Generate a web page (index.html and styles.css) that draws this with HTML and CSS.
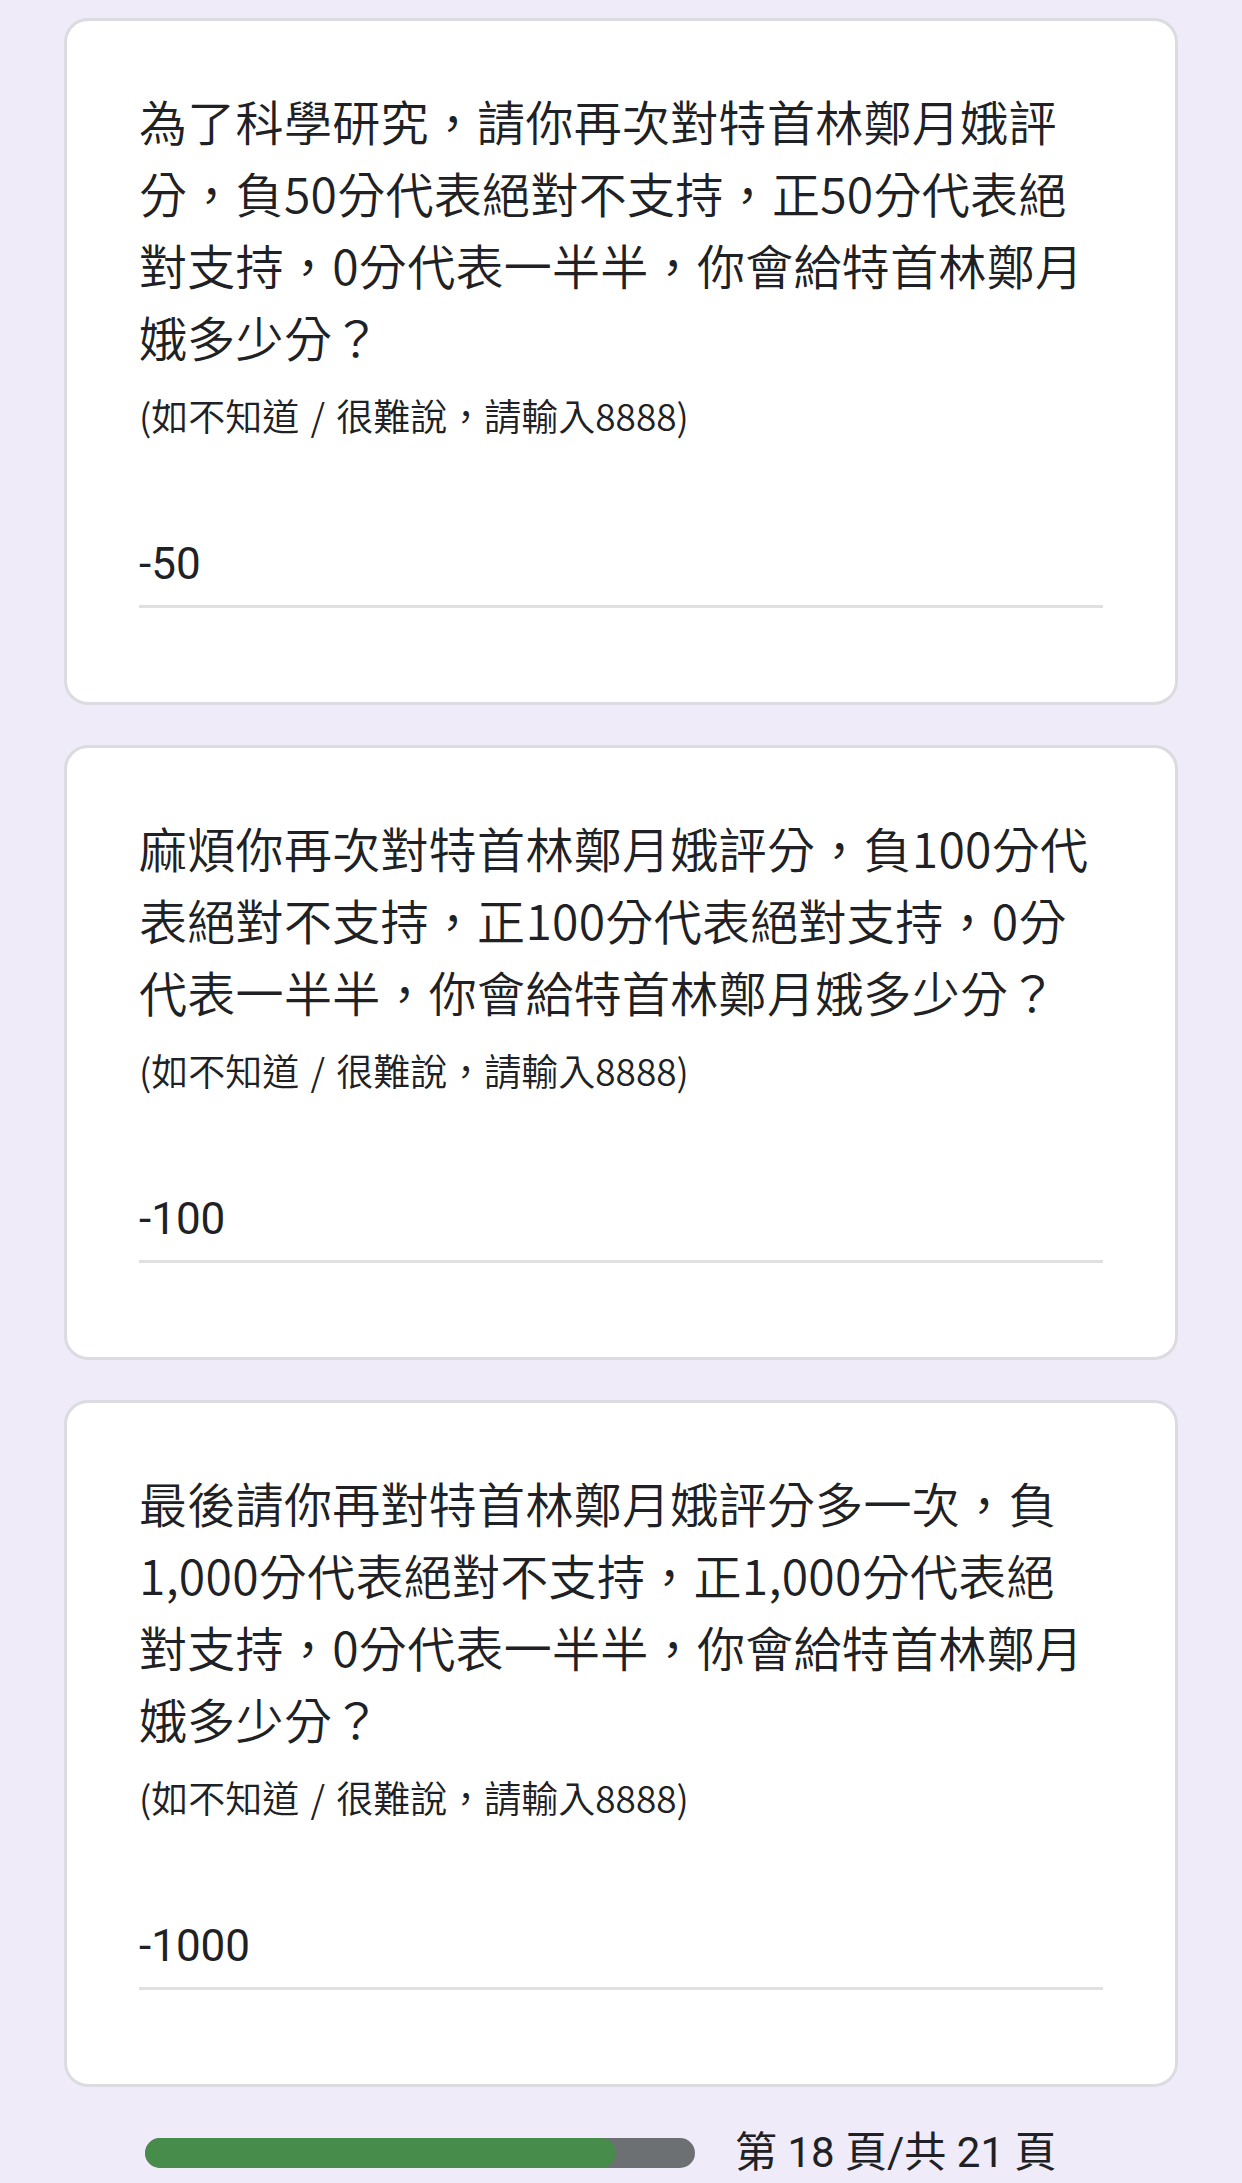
FILE: index.html
```html
<!DOCTYPE html>
<html lang="zh-Hant">
<head>
<meta charset="utf-8">
<title>問卷</title>
<link rel="stylesheet" href="styles.css">
</head>
<body>
<main class="page">
  <section class="card">
    <div class="question">為了科學研究，請你再次對特首林鄭月娥評<br>分，負50分代表絕對不支持，正50分代表絕<br>對支持，0分代表一半半，你會給特首林鄭月<br>娥多少分？</div>
    <div class="hint">(如不知道 / 很難說，請輸入8888)</div>
    <div class="answer">-50</div>
  </section>
  <section class="card">
    <div class="question">麻煩你再次對特首林鄭月娥評分，負100分代<br>表絕對不支持，正100分代表絕對支持，0分<br>代表一半半，你會給特首林鄭月娥多少分？</div>
    <div class="hint">(如不知道 / 很難說，請輸入8888)</div>
    <div class="answer">-100</div>
  </section>
  <section class="card">
    <div class="question">最後請你再對特首林鄭月娥評分多一次，負<br>1,000分代表絕對不支持，正1,000分代表絕<br>對支持，0分代表一半半，你會給特首林鄭月<br>娥多少分？</div>
    <div class="hint">(如不知道 / 很難說，請輸入8888)</div>
    <div class="answer">-1000</div>
  </section>
  <footer class="progress">
    <div class="bar"><div class="fill" style="width: 85.7%"></div></div>
    <span class="ptext">第 18 頁/共 21 頁</span>
  </footer>
</main>
</body>
</html>
```

FILE: styles.css
```css
html, body {
  margin: 0;
  padding: 0;
}

body {
  background: #f0ebf8;
  color: #202124;
  font-family: "Noto Sans CJK TC", "Noto Sans", sans-serif;
}

.page {
  display: flex;
  flex-direction: column;
  gap: 40px;
  padding: 18px 64px 0;
}

.card {
  background: #ffffff;
  border: 3px solid #dadce0;
  border-radius: 24px;
  padding: 63px 72px 94px;
}

.question {
  font-family: "Noto Sans CJK TC", sans-serif;
  font-weight: 350;
  font-size: 48px;
  line-height: 72px;
  letter-spacing: 0.3px;
  color: #202124;
}

.hint {
  margin-top: 16px;
  font-family: "Noto Sans CJK TC", sans-serif;
  font-weight: 350;
  font-size: 37px;
  line-height: 54px;
  word-spacing: 3px;
  color: #202124;
}

.answer {
  margin-top: 89px;
  font-family: Roboto, "Noto Sans CJK TC", sans-serif;
  font-size: 44px;
  line-height: 66px;
  padding-bottom: 8px;
  border-bottom: 3px solid #e0e0e0;
  color: #202124;
}

.progress {
  display: flex;
  align-items: center;
  gap: 40px;
  padding-left: 81px;
  height: 52px;
}

.bar {
  width: 550px;
  height: 30px;
  border-radius: 15px;
  background: #6c7073;
  overflow: hidden;
}

.fill {
  height: 100%;
  background: #478c4b;
  border-radius: 15px;
}

.ptext {
  font-family: Roboto, "Noto Sans CJK TC", sans-serif;
  font-size: 42px;
  line-height: 52px;
  color: #202124;
}
```
